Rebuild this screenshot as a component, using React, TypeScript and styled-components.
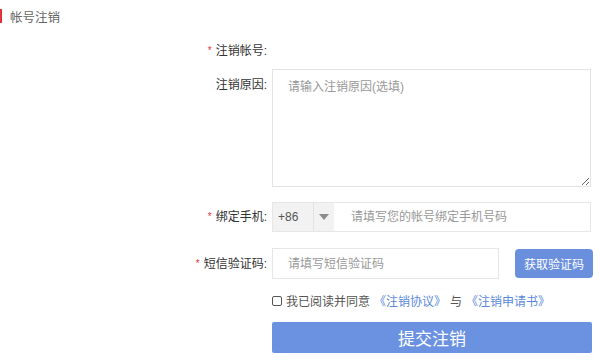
import React from 'react';
import styled, { createGlobalStyle } from 'styled-components';

const GlobalStyle = createGlobalStyle`
    body {
        margin: 0;
        background: #ffffff;
        font-family: "Liberation Sans", "Noto Sans CJK SC", sans-serif;
        color: #333333;
    }
`;

const Page = styled.div`
    width: 600px;
    height: 360px;
    overflow: hidden;
    background: #ffffff;
`;

const Header = styled.div`
    display: flex;
    align-items: center;
    height: 14px;
    margin-top: 9px;
    border-left: 2px solid #e2333b;
    padding-left: 8px;
    font-size: 12.5px;
    color: #666666;
`;

const Form = styled.div`
    display: flex;
    flex-direction: column;
`;

const Row = styled.div<{ $top: number; $align?: string }>`
    display: flex;
    align-items: ${p => p.$align || 'center'};
    margin-top: ${p => p.$top}px;
`;

const Label = styled.div<{ $pad?: number }>`
    width: 267px;
    padding-right: 5px;
    padding-top: ${p => p.$pad || 0}px;
    text-align: right;
    font-size: 12px;
    color: #333333;
    line-height: 26px;
`;

const Star = styled.span`
    color: #e4393c;
    font-size: 10px;
    margin-right: 4px;
    vertical-align: 1px;
`;

const TextArea = styled.textarea`
    width: 319px;
    height: 118px;
    box-sizing: border-box;
    border: 1px solid #e3e3e3;
    padding: 7px 15px;
    font-family: inherit;
    font-size: 12px;
    color: #333;
    resize: vertical;
    outline: none;
    &::placeholder {
        color: #999999;
    }
`;

const PhoneGroup = styled.div`
    display: flex;
    width: 319px;
    height: 30px;
    box-sizing: border-box;
    border: 1px solid #e6e6e6;
`;

const Prefix = styled.div`
    width: 41px;
    background: #f2f2f2;
    border-right: 1px solid #e3e3e3;
    display: flex;
    align-items: center;
    padding-left: 5px;
    box-sizing: border-box;
    font-size: 12px;
    color: #555555;
`;

const Arrow = styled.div`
    width: 20px;
    background: #f2f2f2;
    display: flex;
    align-items: center;
    justify-content: center;
    &::after {
        content: '';
        border-left: 5px solid transparent;
        border-right: 5px solid transparent;
        border-top: 6px solid #8c8c8c;
    }
`;

const Input = styled.input<{ $w: number }>`
    width: ${p => p.$w}px;
    height: 31px;
    box-sizing: border-box;
    border: 1px solid #e6e6e6;
    padding: 0 15px;
    font-family: inherit;
    font-size: 12px;
    outline: none;
    &::placeholder {
        color: #999999;
    }
`;

const PhoneInput = styled(Input)`
    flex: 1;
    height: 100%;
    border: none;
    padding-left: 17px;
`;

const CodeButton = styled.button`
    margin-left: 16px;
    width: 78px;
    height: 29px;
    border: none;
    border-radius: 4px;
    background: #6a8fdc;
    color: #ffffff;
    font-family: inherit;
    font-size: 12px;
    padding: 0;
`;

const Agree = styled.label`
    display: flex;
    align-items: center;
    margin-left: 272px;
    font-size: 12px;
    color: #555555;
`;

const Check = styled.span`
    width: 8px;
    height: 8px;
    border: 1px solid #555;
    border-radius: 2px;
    margin-right: 4px;
`;

const Link = styled.a`
    color: #5b8ad8;
    margin: 0 4px;
`;

const Submit = styled.button`
    margin-left: 272px;
    width: 320px;
    height: 31px;
    border: none;
    border-radius: 2px;
    background: #6b92e0;
    color: #ffffff;
    font-family: inherit;
    font-size: 17px;
    padding: 0;
`;

const App: React.FC = () => {
    return (
        <Page>
            <GlobalStyle />
            <Header>帐号注销</Header>
            <Form>
                <Row $top={15}>
                    <Label><Star>*</Star>注销帐号:</Label>
                </Row>
                <Row $top={5} $align="flex-start">
                    <Label $pad={3}>注销原因:</Label>
                    <TextArea placeholder="请输入注销原因(选填)" />
                </Row>
                <Row $top={15}>
                    <Label><Star>*</Star>绑定手机:</Label>
                    <PhoneGroup>
                        <Prefix>+86</Prefix>
                        <Arrow />
                        <PhoneInput $w={0} placeholder="请填写您的帐号绑定手机号码" />
                    </PhoneGroup>
                </Row>
                <Row $top={16}>
                    <Label><Star>*</Star>短信验证码:</Label>
                    <Input $w={227} placeholder="请填写短信验证码" />
                    <CodeButton>获取验证码</CodeButton>
                </Row>
                <Row $top={13}>
                    <Agree>
                        <Check />我已阅读并同意<Link>《注销协议》</Link>与<Link>《注销申请书》</Link>
                    </Agree>
                </Row>
                <Row $top={13}>
                    <Submit>提交注销</Submit>
                </Row>
            </Form>
        </Page>
    );
};

export default App;
